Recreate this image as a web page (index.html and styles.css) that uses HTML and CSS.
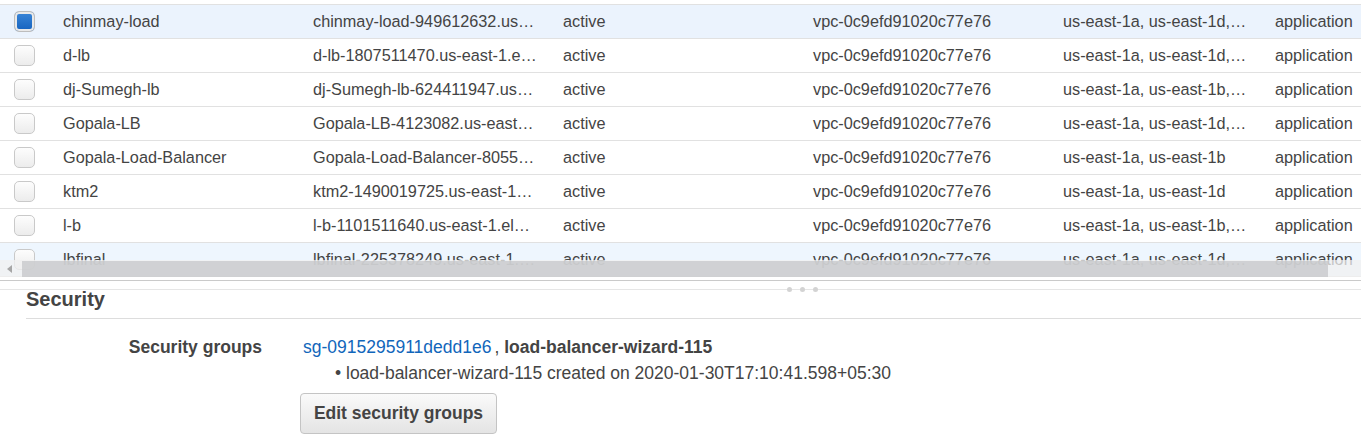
FILE: index.html
```html
<!DOCTYPE html>
<html lang="en">
<head>
<meta charset="utf-8">
<title>Load balancers</title>
<link rel="stylesheet" href="styles.css">
</head>
<body>
<div class="grid-wrap">
  <div class="row selected">
    <div class="cell c-check"><span class="checkbox checked"></span></div>
    <div class="cell c-name">chinmay-load</div>
    <div class="cell c-dns">chinmay-load-949612632.us-east-1.elb.amazonaws.com</div>
    <div class="cell c-state">active</div>
    <div class="cell c-vpc">vpc-0c9efd91020c77e76</div>
    <div class="cell c-az">us-east-1a, us-east-1d, us-east-1b</div>
    <div class="cell c-type">application</div>
  </div>
  <div class="row">
    <div class="cell c-check"><span class="checkbox"></span></div>
    <div class="cell c-name">d-lb</div>
    <div class="cell c-dns">d-lb-1807511470.us-east-1.elb.amazonaws.com</div>
    <div class="cell c-state">active</div>
    <div class="cell c-vpc">vpc-0c9efd91020c77e76</div>
    <div class="cell c-az">us-east-1a, us-east-1d, us-east-1b</div>
    <div class="cell c-type">application</div>
  </div>
  <div class="row">
    <div class="cell c-check"><span class="checkbox"></span></div>
    <div class="cell c-name">dj-Sumegh-lb</div>
    <div class="cell c-dns">dj-Sumegh-lb-624411947.us-east-1.elb.amazonaws.com</div>
    <div class="cell c-state">active</div>
    <div class="cell c-vpc">vpc-0c9efd91020c77e76</div>
    <div class="cell c-az">us-east-1a, us-east-1b, us-east-1d</div>
    <div class="cell c-type">application</div>
  </div>
  <div class="row">
    <div class="cell c-check"><span class="checkbox"></span></div>
    <div class="cell c-name">Gopala-LB</div>
    <div class="cell c-dns">Gopala-LB-4123082.us-east-1.elb.amazonaws.com</div>
    <div class="cell c-state">active</div>
    <div class="cell c-vpc">vpc-0c9efd91020c77e76</div>
    <div class="cell c-az">us-east-1a, us-east-1d, us-east-1b</div>
    <div class="cell c-type">application</div>
  </div>
  <div class="row">
    <div class="cell c-check"><span class="checkbox"></span></div>
    <div class="cell c-name">Gopala-Load-Balancer</div>
    <div class="cell c-dns">Gopala-Load-Balancer-805512345.us-east-1.elb.amazonaws.com</div>
    <div class="cell c-state">active</div>
    <div class="cell c-vpc">vpc-0c9efd91020c77e76</div>
    <div class="cell c-az">us-east-1a, us-east-1b</div>
    <div class="cell c-type">application</div>
  </div>
  <div class="row">
    <div class="cell c-check"><span class="checkbox"></span></div>
    <div class="cell c-name">ktm2</div>
    <div class="cell c-dns">ktm2-1490019725.us-east-1.elb.amazonaws.com</div>
    <div class="cell c-state">active</div>
    <div class="cell c-vpc">vpc-0c9efd91020c77e76</div>
    <div class="cell c-az">us-east-1a, us-east-1d</div>
    <div class="cell c-type">application</div>
  </div>
  <div class="row">
    <div class="cell c-check"><span class="checkbox"></span></div>
    <div class="cell c-name">l-b</div>
    <div class="cell c-dns">l-b-1101511640.us-east-1.elb.amazonaws.com</div>
    <div class="cell c-state">active</div>
    <div class="cell c-vpc">vpc-0c9efd91020c77e76</div>
    <div class="cell c-az">us-east-1a, us-east-1b, us-east-1d</div>
    <div class="cell c-type">application</div>
  </div>
  <div class="row hover">
    <div class="cell c-check"><span class="checkbox"></span></div>
    <div class="cell c-name">lbfinal</div>
    <div class="cell c-dns">lbfinal-225378249.us-east-1.elb.amazonaws.com</div>
    <div class="cell c-state">active</div>
    <div class="cell c-vpc">vpc-0c9efd91020c77e76</div>
    <div class="cell c-az">us-east-1a, us-east-1d, us-east-1b</div>
    <div class="cell c-type">application</div>
  </div>
  <div class="hscroll">
    <span class="hscroll-arrow"></span>
    <span class="hscroll-thumb"></span>
  </div>
</div>
<div class="handle"><span class="dot"></span><span class="dot"></span><span class="dot"></span></div>
<div class="section">
  <h2 class="section-title">Security</h2>
  <div class="details">
    <div class="label">Security groups</div>
    <div class="value">
      <div><a class="link" href="#">sg-0915295911dedd1e6</a>, <b>load-balancer-wizard-115</b></div>
      <div class="note">• load-balancer-wizard-115 created on 2020-01-30T17:10:41.598+05:30</div>
      <button class="btn" type="button">Edit security groups</button>
    </div>
  </div>
</div>
</body>
</html>
```

FILE: styles.css
```css
html, body {
  margin: 0;
  padding: 0;
  background: #fff;
}
body {
  font-family: "Liberation Sans", Arial, sans-serif;
  color: #444;
  overflow: hidden;
}

.grid-wrap {
  position: relative;
  margin-top: 4px;
  height: 275px;
  border-top: 1px solid #e1e1e1;
  border-bottom: 1px solid #cacaca;
  overflow: hidden;
}

.row {
  display: flex;
  align-items: center;
  height: 33px;
  width: 1412px;
  border-bottom: 1px solid #e1e1e1;
  font-size: 16.25px;
}
.row.selected { background: #ebf3fd; }
.row.hover { background: #eef6fe; }

.cell {
  flex: none;
  box-sizing: border-box;
  padding: 0 13px;
  line-height: 33px;
  white-space: nowrap;
  overflow: hidden;
  text-overflow: ellipsis;
}
.c-check { width: 50px; padding: 0 0 0 14px; display: flex; align-items: center; }
.c-name, .c-dns, .c-state, .c-vpc { width: 250px; }
.c-az { width: 212px; }
.c-type { width: 150px; }

.checkbox {
  display: block;
  width: 21px;
  height: 21px;
  box-sizing: border-box;
  border: 1px solid #c9c9c9;
  border-radius: 5px;
  background: linear-gradient(#fdfdfd, #ececec);
}
.checkbox.checked {
  border-color: #bdbdbd;
  background: linear-gradient(#3a86d8, #1562be);
  box-shadow: inset 0 0 0 2px #e9e9e9;
}

.hscroll {
  position: absolute;
  left: 0;
  right: 0;
  top: 255px;
  height: 17px;
  background: rgba(240, 240, 240, 0.75);
}
.hscroll-arrow {
  position: absolute;
  left: 7px;
  top: 5px;
  width: 0;
  height: 0;
  border-top: 4px solid transparent;
  border-bottom: 4px solid transparent;
  border-right: 5px solid #a6a6a6;
}
.hscroll-thumb {
  position: absolute;
  left: 22px;
  width: 1306px;
  top: 1px;
  height: 16px;
  background: rgba(198, 200, 203, 0.78);
}

.handle {
  display: flex;
  align-items: flex-end;
  gap: 8px;
  height: 8px;
  padding-left: 787px;
  border-bottom: 1px solid #e6e6e6;
}
.dot {
  width: 5px;
  height: 5px;
  border-radius: 50%;
  background: #d3d3d3;
  margin-bottom: -3px;
}

.section {
  padding-left: 26px;
}
.section-title {
  margin: 0;
  font-size: 20px;
  font-weight: bold;
  line-height: 18px;
  padding: 0 0 10px 0;
  border-bottom: 1px solid #dddddd;
  color: #444;
}

.details {
  display: flex;
  margin-top: 15px;
  font-size: 17.5px;
  line-height: 26px;
}
.label {
  flex: none;
  width: 236px;
  text-align: right;
  font-weight: bold;
}
.value {
  margin-left: 41px;
}
.link {
  color: #1166bb;
  text-decoration: none;
  margin-right: 3px;
}
.note {
  padding-left: 32px;
}
.btn {
  display: block;
  margin: 7px 0 0 -3px;
  width: 197px;
  height: 41px;
  box-sizing: border-box;
  border: 1px solid #c4c4c4;
  border-radius: 4px;
  background: linear-gradient(#fafafa, #e4e4e4);
  font-family: "Liberation Sans", Arial, sans-serif;
  font-size: 17.5px;
  font-weight: bold;
  color: #444;
  padding: 0;
}
```
